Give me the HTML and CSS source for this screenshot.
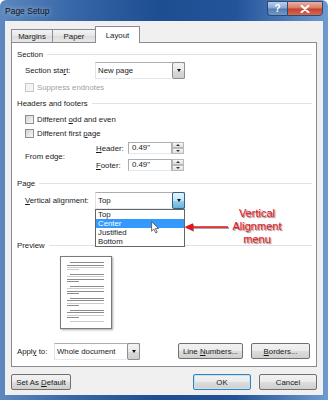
FILE: index.html
```html
<!DOCTYPE html>
<html lang="en">
<head>
  <meta charset="UTF-8" />
  <title>Page Setup</title>
  <link rel="stylesheet" href="styles.css">
</head>
<body>
  <div class="window">
    <div class="titlebar">
      <span class="title">Page Setup</span>
      <div class="caption">
        <span class="cap-btn help">?</span>
        <span class="cap-btn close">
          <svg width="10" height="8" viewBox="0 0 10 8"><path d="M1.5 0.8 L8.5 7.2 M8.5 0.8 L1.5 7.2" stroke="#fff" stroke-width="2" stroke-linecap="round"/></svg>
        </span>
      </div>
    </div>

    <div class="client">
      <div class="tabs">
        <span class="tab tab-margins">Margins</span>
        <span class="tab tab-paper">Paper</span>
        <span class="tab tab-layout active">Layout</span>
      </div>

      <div class="panel">
        <div class="head head-section">Section</div>
        <div class="row row-start">
          <span class="label">Section sta<u>r</u>t:</span>
          <div class="combo">
            <span class="combo-text">New page</span>
            <span class="combo-btn"><i class="tri"></i></span>
          </div>
        </div>
        <div class="check disabled row-suppress">
          <span class="box"></span><span>Suppress endnotes</span>
        </div>

        <div class="head head-hf">Headers and footers</div>
        <div class="check row-odd">
          <span class="box"></span><span>Different <u>o</u>dd and even</span>
        </div>
        <div class="check">
          <span class="box"></span><span>Different first <u>p</u>age</span>
        </div>
        <div class="edge">
          <span class="label">From edge:</span>
          <div class="spins">
            <div class="spin-row">
              <span class="spin-label"><u>H</u>eader:</span>
              <span class="num">0.49"</span>
              <span class="spinner"><span><i class="up"></i></span><span><i class="down"></i></span></span>
            </div>
            <div class="spin-row">
              <span class="spin-label"><u>F</u>ooter:</span>
              <span class="num">0.49"</span>
              <span class="spinner"><span><i class="up"></i></span><span><i class="down"></i></span></span>
            </div>
          </div>
        </div>

        <div class="head head-page">Page</div>
        <div class="row row-valign">
          <span class="label"><u>V</u>ertical alignment:</span>
          <div class="combo">
            <span class="combo-text">Top</span>
            <span class="combo-btn hot"><i class="tri"></i></span>
          </div>
        </div>

        <div class="head head-preview">Preview</div>
        <div class="preview-page">
          <svg width="50" height="71" viewBox="0 0 50 71">
            <g fill="#8c8c8c">
              <rect x="9" y="5" width="34" height="1"/><rect x="6" y="8" width="37" height="1"/>
              <rect x="9" y="17" width="34" height="1"/><rect x="6" y="22" width="37" height="1"/><rect x="6" y="24" width="12" height="1"/>
              <rect x="9" y="29" width="34" height="1"/><rect x="6" y="34" width="37" height="1"/><rect x="6" y="36" width="12" height="1"/>
              <rect x="9" y="41" width="34" height="1"/><rect x="6" y="43" width="37" height="1"/><rect x="6" y="48" width="12" height="1"/>
              <rect x="9" y="53" width="34" height="1"/><rect x="6" y="55" width="37" height="1"/><rect x="6" y="60" width="12" height="1"/>
            </g>
            <g fill="#cbcbcb">
              <rect x="6" y="10" width="37" height="1"/><rect x="6" y="12" width="12" height="1"/>
              <rect x="6" y="19" width="37" height="1"/>
              <rect x="6" y="31" width="37" height="1"/>
              <rect x="6" y="46" width="37" height="1"/>
              <rect x="6" y="58" width="37" height="1"/>
              <rect x="9" y="64" width="34" height="1"/>
            </g>
          </svg>
        </div>

        <div class="apply">
          <span class="apply-label">Appl<u>y</u> to:</span>
          <div class="combo combo-apply">
            <span class="combo-text">Whole document</span>
            <span class="combo-btn"><i class="tri"></i></span>
          </div>
          <span class="btn btn-lines"><span>Line <u>N</u>umbers...</span></span>
          <span class="btn btn-borders"><span><u>B</u>orders...</span></span>
        </div>

        <div class="list">
          <div>Top</div>
          <div class="sel">Center</div>
          <div>Justified</div>
          <div>Bottom</div>
        </div>

        <svg class="cursor" width="9" height="13" viewBox="0 0 9 13">
          <path d="M0.6 0.6 L0.6 10.2 L2.9 8 L4.7 11.9 L6.2 11.2 L4.4 7.5 L7.6 7.5 Z" fill="#fff" stroke="#4a4a4a" stroke-width="0.8"/>
        </svg>

        <svg class="arrow" width="46" height="10" viewBox="0 0 46 10">
          <path d="M6 5 L44 5" stroke="#e3141b" stroke-width="1.6"/>
          <path d="M0.5 5 L9 1.2 L9 8.8 Z" fill="#e3141b"/>
        </svg>

        <div class="note">Vertical<br>Alignment<br>menu</div>
      </div>

      <div class="footer">
        <span class="btn btn-default"><span>Set As <u>D</u>efault</span></span>
        <span class="btn btn-ok">OK</span>
        <span class="btn btn-cancel">Cancel</span>
      </div>
    </div>
  </div>
</body>
</html>
```

FILE: styles.css
```css
* {
  box-sizing: border-box;
}

body {
  margin: 0;
  width: 328px;
  height: 400px;
  overflow: hidden;
  background: #fff;
  font-family: "Liberation Sans", Arial, sans-serif;
  font-size: 7.8px;
  color: #1a1a1a;
}

u {
  text-decoration-thickness: 1px;
  text-underline-offset: 1px;
}

.window {
  width: 328px;
  height: 400px;
  padding: 0 5px 5px;
  display: flex;
  flex-direction: column;
  background: linear-gradient(to right, #5d88bf 0%, #3767a7 22%, #1d4e91 48%, #23549a 72%, #6f9bd0 100%);
  border-radius: 6px 6px 0 0;
}

.titlebar {
  height: 21px;
  display: flex;
  align-items: flex-start;
}

.title {
  font-size: 8.5px;
  line-height: 22px;
  color: #111;
  text-shadow: 0 0 5px rgba(220, 235, 255, 0.8);
}

.caption {
  margin-left: auto;
  display: flex;
  margin-top: 1px;
}

.cap-btn {
  height: 15px;
  display: flex;
  align-items: center;
  justify-content: center;
  border: 1px solid #2d4a70;
  color: #fff;
}

.help {
  width: 20px;
  border-right: none;
  border-radius: 0 0 0 4px;
  background: linear-gradient(#b9cfea, #86a6cf 48%, #537cb3 52%, #7199c9);
  font-weight: bold;
  font-size: 10px;
}

.close {
  width: 36px;
  border-radius: 0 0 4px 0;
  background: linear-gradient(#eab1a4, #d77a66 48%, #c3422b 52%, #d8664f);
}

.client {
  flex: 1;
  background: #f0f0f0;
  padding: 5px 6px;
  display: flex;
  flex-direction: column;
}

/* tabs */
.tabs {
  height: 17px;
  display: flex;
  align-items: flex-end;
  margin-bottom: -1px;
  position: relative;
  z-index: 1;
}

.tab {
  height: 13px;
  margin-bottom: 1px;
  display: flex;
  align-items: center;
  justify-content: center;
  border: 1px solid #898c95;
  border-bottom: none;
  background: linear-gradient(#f4f4f4, #e6e6e6 50%, #dcdcdc 51%, #e8e8e8);
}

.tab-margins {
  width: 42px;
}

.tab-paper {
  width: 44px;
  margin-left: -1px;
}

.tab-layout {
  width: 45px;
  margin-left: -1px;
}

.tab.active {
  height: 17px;
  margin-bottom: 0;
  background: #fff;
}

.panel {
  height: 325px;
  background: #fff;
  border: 1px solid #898c95;
  position: relative;
}

/* group headings */
.head {
  height: 14px;
  display: flex;
  align-items: center;
  padding: 0 4px 0 5px;
}

.head::after {
  content: "";
  flex: 1;
  height: 1px;
  margin-left: 4px;
  background: #dfe2e6;
}

.head-section { margin-top: 4px; }
.head-hf { margin-top: 2px; }
.head-page { margin-top: 5px; }
.head-preview { margin-top: 29px; }

.row {
  display: flex;
  align-items: center;
  padding-left: 13px;
}

.row-start { margin-top: 1px; }
.row-valign { margin-top: 2px; }

.label {
  width: 70px;
}

.combo {
  width: 90px;
  height: 17px;
  display: flex;
  border: 1px solid #abadb3;
  border-bottom-color: #e3e9ef;
  border-left-color: #e2e3ea;
  background: #fff;
}

.combo-text {
  flex: 1;
  padding-left: 2px;
  line-height: 15px;
}

.combo-btn {
  width: 13px;
  margin: -1px -1px -1px 0;
  display: flex;
  align-items: center;
  justify-content: center;
  border: 1px solid #8f8f8f;
  border-radius: 2px;
  background: linear-gradient(#f4f4f4, #e9e9e9 50%, #dadada 51%, #cfcfcf);
}

.combo-btn.hot {
  border-color: #2c628b;
  background: linear-gradient(#e5f4fc, #c4e5f6 50%, #98d1ef 51%, #68b3db);
}

.tri {
  width: 0;
  height: 0;
  border-left: 2.5px solid transparent;
  border-right: 2.5px solid transparent;
  border-top: 3px solid #111;
}

/* checkboxes */
.check {
  height: 14px;
  display: flex;
  align-items: center;
  gap: 3px;
  padding-left: 13px;
}

.row-suppress { margin-top: 1px; }
.row-odd { margin-top: 2px; }

.box {
  width: 9px;
  height: 9px;
  border: 1px solid #8e8f8f;
  background: linear-gradient(135deg, #d3d3d3, #f7f7f7);
}

.check.disabled {
  color: #a0a0a0;
}

.check.disabled .box {
  border-color: #c8c8c8;
  background: #f4f4f4;
}

/* header / footer distance */
.edge {
  display: flex;
  align-items: center;
  padding-left: 13px;
  margin-top: 2px;
}

.spins {
  display: flex;
  flex-direction: column;
  gap: 5px;
}

.spin-row {
  height: 12px;
  display: flex;
  align-items: center;
}

.spin-label {
  width: 33px;
  padding-left: 1px;
}

.num {
  width: 44px;
  height: 12px;
  padding-left: 3px;
  line-height: 10px;
  border: 1px solid #abadb3;
  border-bottom-color: #e3e9ef;
}

.spinner {
  width: 12px;
  height: 12px;
  display: flex;
  flex-direction: column;
}

.spinner span {
  flex: 1;
  display: flex;
  align-items: center;
  justify-content: center;
  border: 1px solid #b9b9b9;
  background: linear-gradient(#f7f7f7, #dfdfdf);
}

.up, .down {
  width: 0;
  height: 0;
  border-left: 2px solid transparent;
  border-right: 2px solid transparent;
}

.up { border-bottom: 2px solid #333; }
.down { border-top: 2px solid #333; }

/* preview */
.preview-page {
  width: 52px;
  height: 73px;
  margin: 4px 0 0 48px;
  border: 1px solid #7a7a7a;
  background: #fff;
  box-shadow: 1px 1px 2px rgba(0, 0, 0, 0.35);
}

.preview-page svg {
  display: block;
}

/* apply row */
.apply {
  height: 17px;
  margin-top: 14px;
  padding-left: 5px;
  display: flex;
  align-items: center;
}

.apply-label {
  width: 37px;
}

.combo-apply {
  width: 86px;
}

.btn {
  height: 16px;
  display: flex;
  align-items: center;
  justify-content: center;
  border: 1px solid #707070;
  border-radius: 2px;
  background: linear-gradient(#f2f2f2, #ebebeb 50%, #dddddd 51%, #cfcfcf);
}

.btn-lines {
  width: 65px;
  margin-left: 38px;
  align-self: flex-start;
}

.btn-borders {
  width: 59px;
  margin-left: 8px;
  align-self: flex-start;
}

/* open dropdown */
.list {
  position: absolute;
  left: 83px;
  top: 166px;
  width: 90px;
  height: 38px;
  border: 1px solid #646464;
  background: #fff;
}

.list div {
  height: 9px;
  line-height: 9px;
  padding-left: 2px;
}

.list .sel {
  background: #3399ff;
  color: #fff;
}

.cursor {
  position: absolute;
  left: 139px;
  top: 178px;
}

.arrow {
  position: absolute;
  left: 172px;
  top: 179px;
  filter: drop-shadow(1px 1px 0.6px rgba(60, 30, 30, 0.55));
}

.note {
  position: absolute;
  left: 207px;
  top: 164px;
  width: 76px;
  text-align: center;
  font-size: 11px;
  line-height: 13px;
  color: #e3141b;
  text-shadow: 1px 1px 1px rgba(60, 20, 20, 0.6);
}

/* bottom buttons */
.footer {
  height: 16px;
  margin-top: 7px;
  display: flex;
}

.btn-default {
  width: 60px;
}

.btn-ok {
  width: 58px;
  margin-left: auto;
  border-color: #3c7fb1;
  box-shadow: inset 0 0 0 1px #bfe4f7;
}

.btn-cancel {
  width: 58px;
  margin-left: 8px;
}
```
